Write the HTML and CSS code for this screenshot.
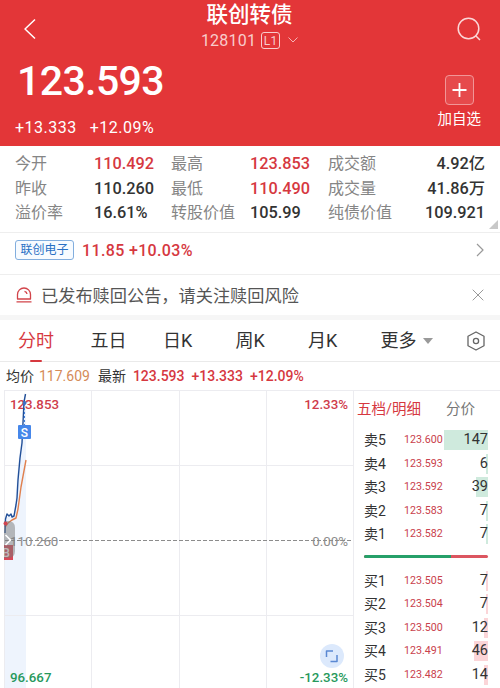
FILE: index.html
```html
<!DOCTYPE html>
<html lang="zh-CN">
  <head>
    <meta charset="UTF-8">
    <title>联创转债 128101</title>
    <link rel="stylesheet" href="styles.css">
  </head>
  <body>
    <header class="header">
      <div class="topbar">
        <svg class="back" width="14" height="22" viewBox="0 0 14 22"><path d="M12 1.500 2 11l10 9.500"/></svg>
        <div class="title">
          <h1>联创转债</h1>
          <div class="code">128101 <span class="level">L1</span>
            <svg width="10" height="6" viewBox="0 0 10 6"><path d="M.5.5 5 5 9.500.5"/></svg>
          </div>
        </div>
        <svg class="search" width="24" height="24" viewBox="0 0 24 24"><circle cx="11.500" cy="11.500" r="10.300"/><path d="m18.500 18.500 4.500 4.500"/></svg>
      </div>
      <div class="summary">
        <div>
          <div class="price">123.593</div>
          <div class="change"><span>+13.333</span><span>+12.09%</span></div>
        </div>
        <div class="add">
          <svg width="29" height="30" viewBox="0 0 29 30"><rect x=".5" y=".5" width="28" height="29" rx="3.500"/><path d="M7.500 15h14M14.500 8v14"/></svg>
          <span>加自选</span>
        </div>
      </div>
    </header>

    <section class="quotes">
      <span class="label">今开</span><b class="up">110.492</b>
      <span class="label">最高</span><b class="up">123.853</b>
      <span class="label">成交额</span><b class="right">4.92亿</b>
      <span class="label">昨收</span><b>110.260</b>
      <span class="label">最低</span><b class="up">110.490</b>
      <span class="label">成交量</span><b class="right">41.86万</b>
      <span class="label">溢价率</span><b>16.61%</b>
      <span class="label">转股价值</span><b>105.99</b>
      <span class="label">纯债价值</span><b class="right">109.921</b>
      <i class="expand"></i>
    </section>

    <section class="stock">
      <span class="tag">联创电子</span>
      <b class="up">11.85 +10.03%</b>
      <svg width="8" height="14" viewBox="0 0 8 14"><path d="m1 1 6 6-6 6"/></svg>
    </section>

    <section class="notice">
      <svg class="bell" width="16" height="16" viewBox="0 0 16 16"><path d="M1.500 12V7.500a6.500 6.500 0 0 1 13 0V12zM.5 14.800h15M8.500 4.300q2.300.4 2.500 2.700"/></svg>
      <span>已发布赎回公告，请关注赎回风险</span>
      <svg class="close" width="12" height="12" viewBox="0 0 12 12"><path d="m.7.7 10.600 10.600M11.300.7.7 11.300"/></svg>
    </section>

    <nav class="tabs">
      <span class="active">分时</span>
      <span>五日</span>
      <span>日K</span>
      <span>周K</span>
      <span>月K</span>
      <span class="more">更多<i></i></span>
      <svg width="18" height="20" viewBox="0 0 18 20"><path d="M9 1 17 5.300v9.400L9 19 1 14.700V5.300z"/><circle cx="9" cy="10" r="2.600"/></svg>
    </nav>

    <div class="latest">
      <span>均价</span><span class="avg">117.609</span>
      <span class="gap">最新</span><b>123.593</b><b>+13.333</b><b>+12.09%</b>
    </div>

    <main class="board">
      <svg class="chart" width="354" height="298" viewBox="0 0 354 298">
        <path class="area" d="M4 127 14 126 18 75 26 7V298H4z"/>
        <path class="grid" d="M4 .5h350M4.500 0v298M91.500 0v298M179.500 0v298M266.500 0v298M353.500 0v298M4 75.500h349M4 225.500h349"/>
        <path class="base" d="M5 150.500h348"/>
        <text class="up" x="10" y="18.500">123.853</text>
        <text class="up end" x="348" y="18.500">12.33%</text>
        <text class="flat" x="10" y="156">110.260</text>
        <text class="flat end" x="348" y="156">0.00%</text>
        <text class="down" x="10" y="292">96.667</text>
        <text class="down end" x="348" y="292">-12.33%</text>
        <path class="avg-line" d="M5 137 8 133 12 130 16 128 18 119 21 97 26 70"/>
        <path class="price-line" d="M5 143 5.500 129 7 124 9 126 11 124 12 127 14 126 16 115 17 108 18 90 20 68 22 53 24 12 25.500 4"/>
        <path class="marker" d="M24.500 14v26"/>
        <circle class="dot blue" cx="24.500" cy="13" r="2"/>
        <rect class="sell" x="18" y="35" width="13" height="14" rx="1"/>
        <text class="mark" x="24.500" y="46.500">S</text>
        <rect class="buy" x="4" y="155" width="9" height="15"/>
        <text class="mark" x="6" y="167">B</text>
        <path class="handle" d="M4 131h4q7 0 7 7v23q0 7-7 7H4z"/>
        <path class="handle-arrow" d="m5.500 145 5 5-5 5"/>
        <circle class="dot red" cx="5.500" cy="133.500" r="2"/>
        <circle class="full" cx="332" cy="266" r="12"/>
        <path class="full-icon" d="M326.500 267v-6h6.500M337 265v6.500h-6.500"/>
      </svg>

      <aside class="depth">
        <div class="depth-tabs"><span class="up">五档/明细</span><span>分价</span></div>
        <div class="order"><span>卖5</span><em>123.600</em><b>147<i style="width: 44px"></i></b></div>
        <div class="order"><span>卖4</span><em>123.593</em><b>6<i style="width: 2px"></i></b></div>
        <div class="order"><span>卖3</span><em>123.592</em><b>39<i style="width: 12px"></i></b></div>
        <div class="order"><span>卖2</span><em>123.583</em><b>7<i style="width: 2px"></i></b></div>
        <div class="order"><span>卖1</span><em>123.582</em><b>7<i style="width: 2px"></i></b></div>
        <div class="ratio"><i style="width: 70.5%"></i></div>
        <div class="order bid"><span>买1</span><em>123.505</em><b>7<i style="width: 2px"></i></b></div>
        <div class="order bid"><span>买2</span><em>123.504</em><b>7<i style="width: 2px"></i></b></div>
        <div class="order bid"><span>买3</span><em>123.500</em><b>12<i style="width: 4px"></i></b></div>
        <div class="order bid"><span>买4</span><em>123.491</em><b>46<i style="width: 14px"></i></b></div>
        <div class="order bid"><span>买5</span><em>123.482</em><b>14<i style="width: 4px"></i></b></div>
      </aside>
    </main>
  </body>
</html>
```

FILE: styles.css
```css
* {
  box-sizing: border-box;
}
body {
  margin: 0;
  width: 500px;
  height: 688px;
  overflow: hidden;
  background: #fff;
  color: #333;
  font-family: Roboto, "Noto Sans CJK SC", sans-serif;
  font-size: 16px;
}
b {
  font-weight: 500;
}
em, i {
  font-style: normal;
}
svg {
  display: block;
  flex: none;
  fill: none;
  stroke-linejoin: round;
}
.up {
  color: #d6383f;
}

/* header */
.header {
  height: 146px;
  padding: 0 18px 0 15px;
  background: #e33638;
  color: #fff;
}
.topbar {
  display: flex;
  justify-content: space-between;
  height: 56px;
}
.back {
  margin: 18px 0 0 8px;
  stroke: #fff;
  stroke-width: 1.5;
}
.title {
  padding-left: 5px;
  text-align: center;
}
.title h1 {
  margin: 0;
  font-size: 21.5px;
  font-weight: 500;
  line-height: 30px;
}
.code {
  display: flex;
  align-items: center;
  height: 20px;
  font-size: 16px;
  letter-spacing: 0.2px;
  color: #f8cccc;
}
.level {
  width: 19px;
  height: 17px;
  margin: 0 8px 0 5px;
  border: 1px solid #f8cccc;
  border-radius: 3px;
  font-size: 12px;
  line-height: 16px;
}
.code svg {
  stroke: #f5b4b5;
}
.search {
  margin: 17px 1px 0 0;
  stroke: #fbd7d7;
  stroke-width: 1.5;
}
.summary {
  display: flex;
  justify-content: space-between;
}
.price {
  height: 52px;
  padding-left: 2px;
  font-size: 41px;
  font-weight: 500;
  letter-spacing: -0.6px;
  line-height: 51px;
}
.change {
  display: flex;
  gap: 13px;
  height: 38px;
  font-size: 16px;
  letter-spacing: 0.5px;
  line-height: 40px;
}
.add {
  display: flex;
  flex-direction: column;
  align-items: center;
  padding: 19px 1px 0 0;
  font-size: 14.5px;
  line-height: 29px;
}
.add rect {
  fill: #e64a4c;
  stroke: #f19697;
}
.add path {
  stroke: #fff;
  stroke-width: 1.8;
}

/* open / high / low ... */
.quotes {
  position: relative;
  display: grid;
  grid-template-columns: 79px 77px 79px 78px 71px 86px;
  grid-template-rows: repeat(3, 24.5px);
  height: 87px;
  padding: 6px 15px 0;
  border-bottom: 1px solid #eee;
  line-height: 24.5px;
  white-space: nowrap;
}
.quotes b {
  font-size: 16.3px;
}
.label {
  color: #858585;
}
.right {
  text-align: right;
}
.expand {
  position: absolute;
  right: 2px;
  bottom: 3px;
  border-bottom: 9px solid #c8c8c8;
  border-left: 9px solid transparent;
}

.stock {
  display: flex;
  align-items: center;
  height: 42px;
  padding: 0 16px 7px 15px;
  border-bottom: 1px solid #eee;
}
.stock b {
  letter-spacing: 0.35px;
}
.tag {
  width: 59px;
  height: 20px;
  margin-right: 8px;
  border: 1px solid #82aede;
  border-radius: 3px;
  background: #f7fbff;
  color: #2870c4;
  font-size: 12px;
  line-height: 18px;
  text-align: center;
}
.stock svg {
  margin-left: auto;
  stroke: #999;
  stroke-width: 1.2;
}

.notice {
  display: flex;
  align-items: center;
  height: 45px;
  padding: 0 16px 1px;
  border-bottom: 5px solid #f6f6f6;
  color: #555;
  font-size: 17.2px;
}
.bell {
  margin-right: 9px;
  stroke: #d2444a;
  stroke-width: 1.3;
}
.close {
  margin-left: auto;
  stroke: #999;
}

/* period tabs */
.tabs {
  display: flex;
  align-items: center;
  height: 42px;
  padding: 0 15px 0 18px;
  border-bottom: 1px solid #eaeaea;
  font-size: 18px;
  line-height: 42px;
}
.tabs span {
  width: 72.5px;
}
.tabs .active {
  position: relative;
  color: #d6383f;
}
.active::after {
  content: "";
  position: absolute;
  left: 12px;
  bottom: 0;
  width: 12px;
  height: 2px;
  border-radius: 1px;
  background: #d6383f;
}
.tabs .more {
  display: flex;
  align-items: center;
  gap: 6px;
}
.more i {
  border: 5px solid transparent;
  border-top: 6px solid #999;
  border-bottom: 0;
}
.tabs svg {
  margin-left: auto;
  stroke: #666;
  stroke-width: 1.3;
}

.latest {
  display: flex;
  height: 28px;
  padding-left: 6px;
  font-size: 14px;
  line-height: 28px;
}
.latest .avg {
  margin-left: 5px;
  color: #d58b58;
}
.latest .gap {
  margin-left: 8px;
}
.latest b {
  margin-left: 7px;
  color: #d6383f;
}

/* minute chart */
.board {
  display: flex;
  height: 298px;
}
.chart text {
  font-size: 13.3px;
  font-weight: 500;
}
.chart .end {
  text-anchor: end;
}
.chart .up {
  fill: #cf3c4b;
}
.chart .down {
  fill: #27995c;
}
.chart .flat {
  fill: #8c8c8c;
  font-weight: 400;
}
.area {
  fill: #eef4fd;
}
.grid {
  stroke: #ececf0;
}
.base {
  stroke: #8c8c8c;
  stroke-dasharray: 4 2;
}
.price-line {
  stroke: #214f98;
  stroke-width: 1.4;
}
.avg-line {
  stroke: #e0804e;
  stroke-width: 1.4;
}
.marker {
  stroke: #4280dc;
  stroke-dasharray: 2 2;
}
.blue {
  fill: #3d6fc4;
}
.red {
  fill: #cf4450;
}
.sell {
  fill: #4687ea;
}
.buy {
  fill: #d84858;
}
.chart .mark {
  fill: #fff;
  font-size: 12px;
  text-anchor: middle;
}
.handle {
  fill: #777;
  fill-opacity: 0.5;
}
.handle-arrow {
  stroke: #fff;
  stroke-width: 1.6;
}
.full {
  fill: #dce9fc;
}
.full-icon {
  stroke: #5a88d2;
  stroke-width: 1.5;
}

/* order book */
.depth {
  width: 146px;
  padding: 0 12px 0 3px;
  border-top: 1px solid #ececf0;
}
.depth-tabs {
  display: flex;
  justify-content: space-between;
  height: 37px;
  padding-right: 13px;
  color: #777;
  font-size: 14.5px;
  line-height: 37px;
}
.order {
  display: grid;
  grid-template-columns: 40px 40px 44px;
  height: 23.5px;
  padding-left: 7px;
  font-size: 14px;
  line-height: 24px;
}
.order em {
  color: #c9414c;
  font-size: 10.7px;
}
.order b {
  position: relative;
  z-index: 0;
  font-size: 14.5px;
  font-weight: 400;
  text-align: right;
}
.order b i {
  position: absolute;
  z-index: -1;
  top: 2px;
  right: 0;
  height: 20px;
  background: #cfeadd;
}
.bid b i {
  background: #fbd5d8;
}
.ratio {
  height: 3px;
  margin: 9px 0 11px 7px;
  border-radius: 2px;
  background: #dc5660;
  overflow: hidden;
}
.ratio i {
  display: block;
  height: 3px;
  background: #26a069;
}
```
